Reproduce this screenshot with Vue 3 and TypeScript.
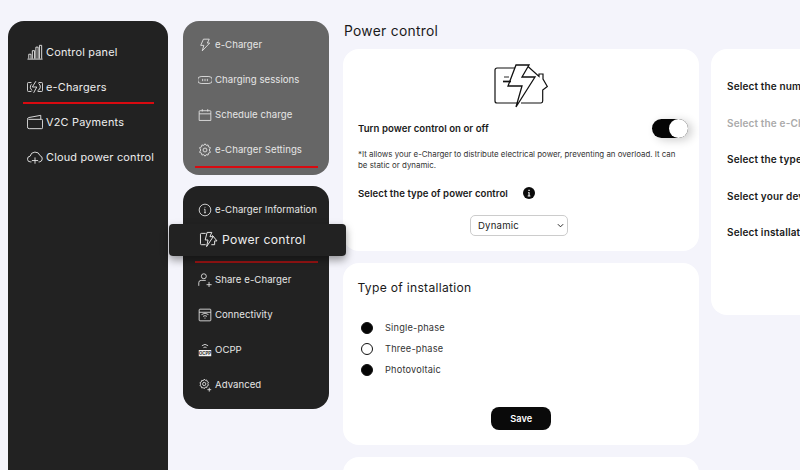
<template>
  <div class="page">
    <nav class="sidebar">
      <a v-for="item in mainMenu" :key="item.label" class="row" :class="{ underlined: item.active }">
        <svg class="icon" viewBox="0 0 18 18" fill="none" stroke="currentColor" stroke-width="1">
          <path :d="item.icon" />
        </svg>
        <span>{{ item.label }}</span>
      </a>
    </nav>

    <div class="submenus">
      <nav class="card-menu grey">
        <a v-for="item in chargerMenu" :key="item.label" class="row" :class="{ underlined: item.active }">
          <svg class="icon small" viewBox="0 0 18 18" fill="none" stroke="currentColor" stroke-width="1.1">
            <path :d="item.icon" />
          </svg>
          <span>{{ item.label }}</span>
        </a>
      </nav>
      <nav class="card-menu dark">
        <a class="row">
          <svg class="icon small" viewBox="0 0 18 18" fill="none" stroke="currentColor" stroke-width="1.1">
            <circle cx="9" cy="9" r="7.5" />
            <path d="M9 8v4.500M7.800 8H9M7.800 12.500h2.400M9 5v1" />
          </svg>
          <span>e-Charger Information</span>
        </a>
        <a class="popup">
          <svg class="icon popup-icon" viewBox="0 0 20 18" fill="none" stroke="currentColor" stroke-width="1">
            <path d="M7 2.500H2.500a1 1 0 0 0-1 1v10a1 1 0 0 0 1 1H7M13 14.500h3.500V10.500H19L14 4.500" />
            <path d="M8.500 1.500h5l-2 4.500h3.500L8 16.500l1.500-7H6.500z" />
          </svg>
          <span>Power control</span>
        </a>
        <div class="popup-rule"></div>
        <a v-for="item in settingsMenu" :key="item.label" class="row">
          <svg class="icon small" viewBox="0 0 18 18" fill="none" stroke="currentColor" stroke-width="1.1">
            <path :d="item.icon" />
            <template v-if="item.tag">
              <rect x="1" y="9" width="16" height="8" fill="#f2f2f2" stroke="none" />
              <text x="9" y="15" class="tag">{{ item.tag }}</text>
            </template>
          </svg>
          <span>{{ item.label }}</span>
        </a>
      </nav>
    </div>

    <main class="content">
      <h1>Power control</h1>

      <section class="panel control">
        <svg class="hero" viewBox="0 0 54 44" fill="none" stroke="#111" stroke-width="1.1">
          <path d="M21 4H3a2 2 0 0 0-2 2v31a2 2 0 0 0 2 2h20M27 39h20a2 2 0 0 0 1.700-2V26l4.600-3.500L49 15v-5h-4v2.500L34 2.500" stroke-width="1.2" />
          <path d="M22 1h13l-7 12h13L22 43l6-21H14z" stroke-width="1.3" fill="#fff" />
          <path d="M10 13h5" stroke-width=".9" />
          <path d="M9 17.500h8" stroke-width="1.700" />
        </svg>

        <div class="switch-row">
          <strong>Turn power control on or off</strong>
          <span class="switch"><i></i></span>
        </div>
        <p class="note">*It allows your e-Charger to distribute electrical power, preventing an overload. It can be static or dynamic.</p>
        <div class="type-row">
          <strong>Select the type of power control</strong>
          <svg class="info" viewBox="0 0 12 12">
            <circle cx="6" cy="6" r="6" fill="#0a0a0a" />
            <path d="M5 5.200h1.600v3.400h.8v.8H4.700v-.8h.8V6H5zM5.400 2.700h1.300v1.400H5.400z" fill="#fff" />
          </svg>
        </div>
        <div class="select-wrap">
          <div class="select-box">
            <select v-model="powerType">
              <option>Dynamic</option>
              <option>Static</option>
            </select>
            <svg class="chevron" viewBox="0 0 8 5" fill="none" stroke="#222" stroke-width="1.100">
              <path d="M1 1l3 3 3-3" />
            </svg>
          </div>
        </div>
      </section>

      <section class="panel install">
        <h2>Type of installation</h2>
        <ul>
          <li v-for="opt in phases" :key="opt.label">
            <span class="radio" :class="{ on: opt.on }"></span>
            {{ opt.label }}
          </li>
        </ul>
        <div class="save-wrap">
          <button type="button">Save</button>
        </div>
      </section>

      <section class="panel stub"></section>
    </main>

    <aside class="panel side">
      <strong v-for="line in sideLines" :key="line.text" :class="{ muted: line.muted }">{{ line.text }}</strong>
    </aside>
  </div>
</template>

<script setup lang="ts">
import { ref } from 'vue'

interface MenuItem {
  label: string
  icon: string
  active?: boolean
  tag?: string
}

const powerType = ref('Dynamic')

const mainMenu: MenuItem[] = [
  { label: 'Control panel', icon: 'M0.500 17h17M2 16.500v-5h2.500v5M6 16.500v-9h2.500v9M10 16.500V3.500h2.500v13M14 16.500V1.500h2.500v15' },
  { label: 'e-Chargers', icon: 'M5 4H1.500a1 1 0 0 0-1 1v8a1 1 0 0 0 1 1H5M12 14h4.500a1 1 0 0 0 1-1V5a1 1 0 0 0-1-1H13M10 2.500L6 9h5l-3.500 6.500M5 6a4.500 4.500 0 0 0 1 7M13 5a4.500 4.500 0 0 1-1 8', active: true },
  { label: 'V2C Payments', icon: 'M1.500 6h15a1 1 0 0 1 1 1v8.500a1 1 0 0 1-1 1H2.500a2 2 0 0 1-2-2V6a2 2 0 0 1 1.500-2L15.500 1.500V6' },
  { label: 'Cloud power control', icon: 'M5 14.500H4a3.200 3.200 0 0 1-.5-6.400 5.800 5.800 0 0 1 11.200-.6 3.600 3.600 0 0 1-.7 7h-1M9 9.500v7M5.500 13h7' }
]

const chargerMenu: MenuItem[] = [
  { label: 'e-Charger', icon: 'M7 1.500h7.500l-2.500 5h3L5.500 16.500l2-7H3.500z' },
  { label: 'Charging sessions', icon: 'M4 4.500h10a4.500 4.500 0 0 1 0 9H4a3.500 3.500 0 0 1 0-9zM6 7.500v3M9 7.500v3M12 7.500v3' },
  { label: 'Schedule charge', icon: 'M2.500 3.500h13a1 1 0 0 1 1 1v11.500h-15V4.500a1 1 0 0 1 1-1zM1.500 7.500h15M5.500 1.500v3M12.500 1.500v3' },
  { label: 'e-Charger Settings', icon: 'M9 1l1.500 2 2.500-.5.500 2.500 2.500 1L14.500 9l1.500 3-2.500 1-.5 2.500-2.500-.5L9 17l-1.500-2-2.500.5-.5-2.500-2.500-1L3.500 9 2 6l2.500-1L5 2.500l2.500.5L9 1zM9 6.500a2.500 2.500 0 1 0 0 5 2.500 2.500 0 0 0 0-5z', active: true }
]

const settingsMenu: MenuItem[] = [
  { label: 'Share e-Charger', icon: 'M7.500 1a3.200 3.200 0 1 0 0 6.400A3.200 3.200 0 0 0 7.500 1zM1 16.500v-4a3 3 0 0 1 3-3h6M11 15h6.500M14.200 11.500v6.500' },
  { label: 'Connectivity', icon: 'M2.500 1.500h13a1 1 0 0 1 1 1v13a1 1 0 0 1-1 1h-13a1 1 0 0 1-1-1v-13a1 1 0 0 1 1-1zM1.500 5.500h15M4.500 8.500a7 7 0 0 1 9 0M6.500 10.800a4 4 0 0 1 5 0M8.300 13h1.400' },
  { label: 'OCPP', icon: 'M5 3.500a6 6 0 0 1 8 0M7 6a3 3 0 0 1 4 0', tag: 'OCPP' },
  { label: 'Advanced', icon: 'M8 1.500l1.200 1.500 2.100-.4.400 2 1.800.9-.9 1.900.9 1.900-1.800.9-.4 2-2.100-.4L8 13.800l-1.200-1.500-2.100.4-.4-2-1.800-.9.900-1.900-.9-1.900 1.800-.9.4-2 2.100.4L8 1.500zM8 5.600a2.100 2.100 0 1 0 0 4.200 2.100 2.100 0 0 0 0-4.200zM12 15h5M14.500 12.500v5' }
]

const phases = [
  { label: 'Single-phase', on: true },
  { label: 'Three-phase', on: false },
  { label: 'Photovoltaic', on: true }
]

const sideLines = [
  { text: 'Select the number of phases', muted: false },
  { text: 'Select the e-Charger mode', muted: true },
  { text: 'Select the type of meter', muted: false },
  { text: 'Select your device', muted: false },
  { text: 'Select installation', muted: false }
]
</script>

<style>
html,
body {
  margin: 0;
  background: #f4f4fb;
}
</style>

<style scoped>
.page {
  display: flex;
  align-items: flex-start;
  width: 800px;
  height: 470px;
  overflow: hidden;
  box-sizing: border-box;
  padding: 21px 0 0 8px;
  background: #f4f4fb;
  font-family: Inter, 'Open Sans', sans-serif;
  color: #1a1a1a;
}
.sidebar {
  flex: none;
  width: 160px;
  height: 470px;
  box-sizing: border-box;
  padding: 13px 14px 0 19px;
  background: #222;
  border-radius: 16px;
  color: #eee;
  font-size: 10.9px;
  letter-spacing: 0.2px;
}
.row {
  position: relative;
  display: flex;
  align-items: center;
  gap: 3px;
  height: 35px;
  white-space: nowrap;
}
.underlined::after {
  content: '';
  position: absolute;
  left: -4px;
  right: 0;
  bottom: 0;
  height: 2px;
  background: #d90a10;
}
.icon {
  flex: none;
  width: 16px;
  height: 16px;
}
.small {
  width: 14px;
  height: 14px;
}
.submenus {
  flex: none;
  width: 146px;
  margin-left: 15px;
  display: flex;
  flex-direction: column;
  gap: 11px;
}
.card-menu {
  box-sizing: border-box;
  padding: 0 11px 0 15px;
  border-radius: 16px;
  color: #e6e6e6;
  font-size: 9.6px;
  letter-spacing: 0.05px;
}
.card-menu .row {
  gap: 3px;
}
.card-menu .underlined::after {
  left: -3px;
  bottom: -1px;
}
.tag {
  font-size: 5.500px;
  font-weight: 700;
  text-anchor: middle;
  fill: #222;
  stroke: none;
}
.grey {
  height: 154px;
  padding-top: 6px;
  background: #666;
}
.dark {
  height: 223px;
  padding-top: 6px;
  background: #222;
}
.popup {
  display: flex;
  align-items: center;
  gap: 4px;
  height: 32px;
  margin: -3px -28px 0 -29px;
  padding: 0 0 2px 30px;
  box-sizing: border-box;
  position: relative;
  background: #222;
  border-radius: 4px;
  box-shadow: 0 4px 8px rgba(0, 0, 0, 0.4);
  font-size: 12.2px;
  letter-spacing: 0.3px;
  color: #eee;
}
.popup-icon {
  width: 19px;
  height: 17px;
}
.popup-rule {
  height: 2px;
  margin: 5px 0 -1px -3px;
  background: #9c1414;
}
.content {
  flex: none;
  width: 356px;
  margin-left: 14px;
}
h1 {
  margin: 0;
  height: 28px;
  padding-left: 1px;
  font-size: 13.8px;
  font-weight: 400;
  line-height: 20px;
  letter-spacing: 0.3px;
}
.panel {
  box-sizing: border-box;
  background: #fff;
  border-radius: 16px;
}
.control {
  display: flex;
  flex-direction: column;
  height: 202px;
  margin-bottom: 12px;
  padding: 15px 15px 0;
}
.hero {
  width: 54px;
  height: 44px;
  align-self: center;
  margin-left: -1px;
}
.switch-row {
  display: flex;
  align-items: center;
  justify-content: space-between;
  height: 20px;
  margin-top: 10px;
}
strong {
  font-size: 9.6px;
  font-weight: 600;
  letter-spacing: 0.05px;
}
.switch {
  display: block;
  width: 36px;
  height: 19px;
  margin-right: -4px;
  border-radius: 10px;
  background: #050505;
  position: relative;
  box-shadow: 4px 2px 10px rgba(0, 0, 0, 0.2);
}
.switch i {
  position: absolute;
  right: 0;
  top: 0;
  width: 19px;
  height: 19px;
  border-radius: 50%;
  background: #fff;
}
.note {
  margin: 11px 0 0;
  font-size: 7.9px;
  line-height: 11px;
  color: #333;
}
.type-row {
  display: flex;
  align-items: center;
  gap: 15px;
  height: 14px;
  margin-top: 15px;
}
.info {
  flex: none;
  width: 12px;
  height: 12px;
}
.select-wrap {
  display: flex;
  justify-content: center;
  margin-top: 15px;
  margin-left: -4px;
}
.select-box {
  position: relative;
}
select {
  display: block;
  width: 98px;
  height: 21px;
  padding: 0 7px;
  appearance: none;
  background: #fff;
  border: 1px solid #ccc;
  border-radius: 5px;
  font-family: inherit;
  font-size: 9.6px;
  letter-spacing: 0.2px;
  color: #222;
}
.chevron {
  position: absolute;
  right: 4px;
  top: 8px;
  width: 7px;
  height: 5px;
  pointer-events: none;
}
.install {
  height: 182px;
  margin-bottom: 12px;
  padding: 16px 14px 0 14.500px;
}
h2 {
  margin: 0;
  font-size: 12.1px;
  font-weight: 400;
  line-height: 18px;
  letter-spacing: 0.3px;
}
ul {
  list-style: none;
  margin: 20px 0 0;
  padding: 0 0 0 3.500px;
}
li {
  display: flex;
  align-items: center;
  gap: 12px;
  height: 21px;
  font-size: 9.2px;
  letter-spacing: 0.2px;
  color: #333;
}
.radio {
  flex: none;
  width: 12px;
  height: 12px;
  box-sizing: border-box;
  border: 1px solid #111;
  border-radius: 50%;
}
.on {
  background: #050505;
}
.save-wrap {
  display: flex;
  justify-content: center;
  margin-top: 27px;
}
button {
  width: 60px;
  height: 23px;
  border: 0;
  border-radius: 8px;
  background: #0a0a0a;
  color: #fff;
  font-family: inherit;
  font-size: 9.2px;
  font-weight: 600;
}
.stub {
  height: 60px;
}
.side {
  flex: none;
  display: flex;
  flex-direction: column;
  gap: 24.5px;
  width: 200px;
  height: 266px;
  margin: 28px 0 0 12px;
  padding: 31px 0 0 16px;
}
.side strong {
  font-size: 10px;
  letter-spacing: 0.15px;
  line-height: 12px;
  white-space: nowrap;
}
.muted {
  color: #aaa;
}
</style>
